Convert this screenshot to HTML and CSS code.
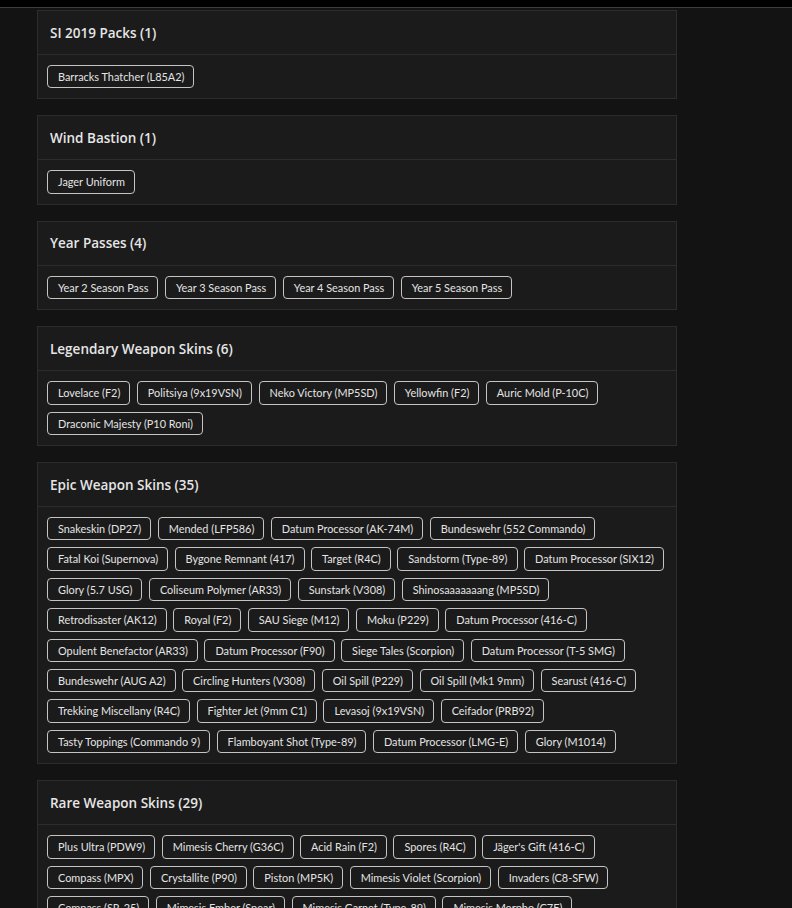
FILE: index.html
```html
<!DOCTYPE html>
<html lang="en">
<head>
    <meta charset="UTF-8">
    <meta name="viewport" content="width=device-width, initial-scale=1.0">
    <title>Inventory</title>
    <link rel="stylesheet" href="styles.css">
</head>
<body>

<!-- Top bar -->
<div class="top-bar"></div>

<div class="inventory">

    <div class="category">
        <div class="category-header">SI 2019 Packs (1)</div>
        <div class="item-list">
            <span class="item">Barracks Thatcher (L85A2)</span>
        </div>
    </div>

    <div class="category">
        <div class="category-header">Wind Bastion (1)</div>
        <div class="item-list">
            <span class="item">Jager Uniform</span>
        </div>
    </div>

    <div class="category">
        <div class="category-header">Year Passes (4)</div>
        <div class="item-list">
            <span class="item">Year 2 Season Pass</span>
            <span class="item">Year 3 Season Pass</span>
            <span class="item">Year 4 Season Pass</span>
            <span class="item">Year 5 Season Pass</span>
        </div>
    </div>

    <div class="category">
        <div class="category-header">Legendary Weapon Skins (6)</div>
        <div class="item-list">
            <span class="item">Lovelace (F2)</span>
            <span class="item">Politsiya (9x19VSN)</span>
            <span class="item">Neko Victory (MP5SD)</span>
            <span class="item">Yellowfin (F2)</span>
            <span class="item">Auric Mold (P-10C)</span>
            <span class="item">Draconic Majesty (P10 Roni)</span>
        </div>
    </div>

    <div class="category">
        <div class="category-header">Epic Weapon Skins (35)</div>
        <div class="item-list">
            <span class="item">Snakeskin (DP27)</span>
            <span class="item">Mended (LFP586)</span>
            <span class="item">Datum Processor (AK-74M)</span>
            <span class="item">Bundeswehr (552 Commando)</span>
            <span class="item">Fatal Koi (Supernova)</span>
            <span class="item">Bygone Remnant (417)</span>
            <span class="item">Target (R4C)</span>
            <span class="item">Sandstorm (Type-89)</span>
            <span class="item">Datum Processor (SIX12)</span>
            <span class="item">Glory (5.7 USG)</span>
            <span class="item">Coliseum Polymer (AR33)</span>
            <span class="item">Sunstark (V308)</span>
            <span class="item">Shinosaaaaaaang (MP5SD)</span>
            <span class="item">Retrodisaster (AK12)</span>
            <span class="item">Royal (F2)</span>
            <span class="item">SAU Siege (M12)</span>
            <span class="item">Moku (P229)</span>
            <span class="item">Datum Processor (416-C)</span>
            <span class="item">Opulent Benefactor (AR33)</span>
            <span class="item">Datum Processor (F90)</span>
            <span class="item">Siege Tales (Scorpion)</span>
            <span class="item">Datum Processor (T-5 SMG)</span>
            <span class="item">Bundeswehr (AUG A2)</span>
            <span class="item">Circling Hunters (V308)</span>
            <span class="item">Oil Spill (P229)</span>
            <span class="item">Oil Spill (Mk1 9mm)</span>
            <span class="item">Searust (416-C)</span>
            <span class="item">Trekking Miscellany (R4C)</span>
            <span class="item">Fighter Jet (9mm C1)</span>
            <span class="item">Levasoj (9x19VSN)</span>
            <span class="item">Ceifador (PRB92)</span>
            <span class="item">Tasty Toppings (Commando 9)</span>
            <span class="item">Flamboyant Shot (Type-89)</span>
            <span class="item">Datum Processor (LMG-E)</span>
            <span class="item">Glory (M1014)</span>
        </div>
    </div>

    <div class="category">
        <div class="category-header">Rare Weapon Skins (29)</div>
        <div class="item-list">
            <span class="item">Plus Ultra (PDW9)</span>
            <span class="item">Mimesis Cherry (G36C)</span>
            <span class="item">Acid Rain (F2)</span>
            <span class="item">Spores (R4C)</span>
            <span class="item">Jäger's Gift (416-C)</span>
            <span class="item">Compass (MPX)</span>
            <span class="item">Crystallite (P90)</span>
            <span class="item">Piston (MP5K)</span>
            <span class="item">Mimesis Violet (Scorpion)</span>
            <span class="item">Invaders (C8-SFW)</span>
            <span class="item">Compass (SR-25)</span>
            <span class="item">Mimesis Ember (Spear)</span>
            <span class="item">Mimesis Garnet (Type-89)</span>
            <span class="item">Mimesis Morpho (C7E)</span>
            <span class="item">Mimesis Lime (MP7)</span>
            <span class="item">Mimesis Azure (M590A1)</span>
            <span class="item">Crystallite (AR-15.50)</span>
            <span class="item">Piston (G8A1)</span>
            <span class="item">Compass (SMG-11)</span>
            <span class="item">Acid Rain (MP5)</span>
            <span class="item">Spores (OTs-03)</span>
            <span class="item">Invaders (Vector .45 ACP)</span>
            <span class="item">Plus Ultra (M45 MEUSOC)</span>
            <span class="item">Mimesis Cherry (Mx4 Storm)</span>
            <span class="item">Crystallite (ITA12L)</span>
            <span class="item">Piston (P12)</span>
            <span class="item">Compass (417)</span>
            <span class="item">Acid Rain (SPAS-15)</span>
            <span class="item">Spores (TCSG12)</span>
        </div>
    </div>

</div>

</body>
</html>
```

FILE: styles.css
```css
/* Dark inventory page */
body {
    margin: 0;
    font-family: Lato, "Open Sans", sans-serif;
    background-color: #131313;
    color: #e2e2e2;
}

/* Thin black strip along the top */
.top-bar {
    height: 7px;
    background-color: #000;
    border-bottom: 1px solid #3c3c3c;
}

.inventory {
    width: 640px;
    margin-left: 37px;
    padding-top: 2px;
    display: flex;
    flex-direction: column;
    gap: 16px;
}

/* Category card */
.category {
    background-color: #1b1b1b;
    border: 1px solid #2c2c2c;
}

.category-header {
    height: 43px;
    display: flex;
    align-items: center;
    padding-left: 12px;
    font-family: "Open Sans", Lato, sans-serif;
    font-size: 13.5px;
    font-weight: 600;
    color: #e6e6e6;
    border-bottom: 1px solid #2c2c2c;
}

.item-list {
    display: flex;
    flex-wrap: wrap;
    gap: 7px 6.5px;
    padding: 10px 9px;
}

/* Item pill */
.item {
    font-size: 10.9px;
    line-height: 15.4px;
    padding: 3px 9px 3px 10px;
    border: 1px solid #c4c4c4;
    border-radius: 4px;
    color: #e4e4e4;
    white-space: nowrap;
}
```
